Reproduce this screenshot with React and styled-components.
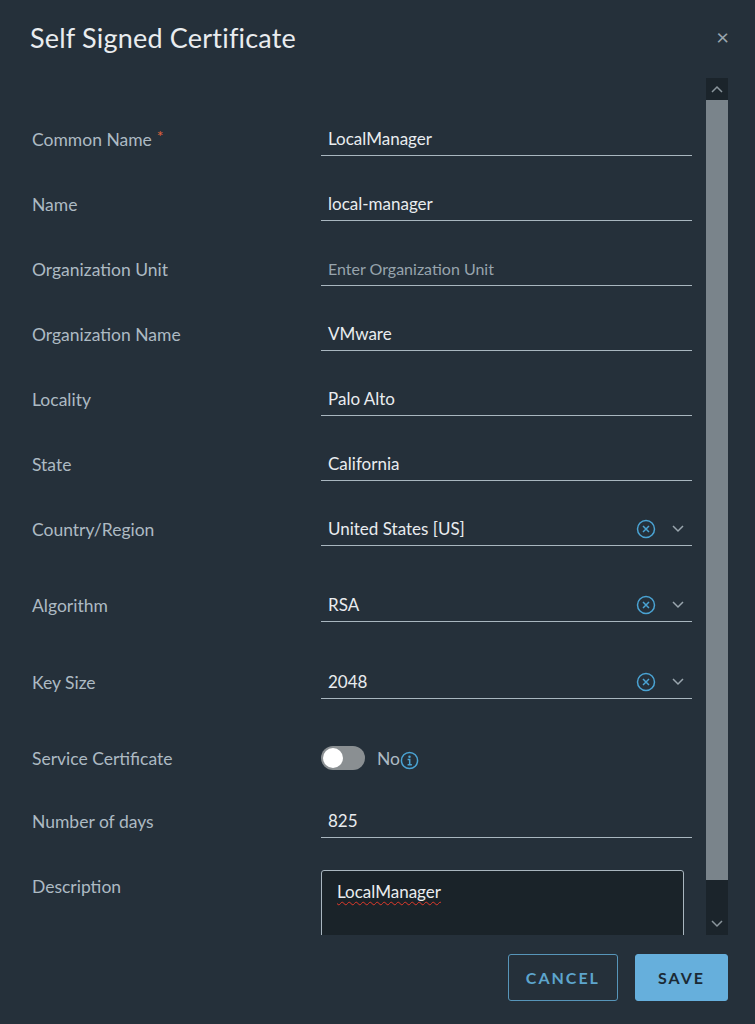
import React from "react";
import styled, { createGlobalStyle } from "styled-components";

const Global = createGlobalStyle`
  html, body { margin: 0; padding: 0; background: #25303a; }
  body { font-family: Lato, "Noto Sans", sans-serif; }
`;

const Modal = styled.div`
  width: 755px; height: 1024px; background: #25303a; display: flex; flex-direction: column;
  box-sizing: border-box;
`;
const Header = styled.div`
  height: 78px; display: flex; align-items: center; justify-content: space-between;
  padding: 0 30px 0 30px; box-sizing: border-box; padding-bottom: 4px;
`;
const Title = styled.h1`
  margin: 0; font-weight: 400; font-size: 27px; color: #e9ecef; letter-spacing: 0.2px;
`;
const Close = styled.div`
  color: #9aa6ae; font-size: 22px; line-height: 1; margin-right: -4px;
`;
const Body = styled.div`
  height: 857px; display: flex; overflow: hidden;
`;
const Form = styled.div`
  flex: 1; padding: 44px 14px 0 32px; display: flex; flex-direction: column;
`;
const Row = styled.div`
  height: ${p => p.$h}px; display: flex; align-items: flex-start; flex-shrink: 0;
`;
const Label = styled.div`
  width: 289px; height: 34px; display: flex; align-items: center;
  color: #adbac3; font-size: 17.5px;
`;
const Req = styled.span`
  color: #e0623c; margin-left: 5px; align-self: flex-start; margin-top: 4px; font-size: 16px;
`;
const Field = styled.div`
  width: 371px; height: 34px; box-sizing: border-box; border-bottom: 1.5px solid #a9b6bf;
  display: flex; align-items: center; padding: 0 8px 0 7px;
  color: ${p => (p.$placeholder ? "#97a4ad" : "#e9ecef")};
  font-size: ${p => (p.$placeholder ? "16px" : "17px")};
`;
const Value = styled.span` flex: 1; `;
const Toggle = styled.div`
  width: 44px; height: 24px; border-radius: 12px; background: #8a8f92; position: relative;
  &::after { content: ""; position: absolute; left: 2px; top: 2px; width: 20px; height: 20px;
    border-radius: 50%; background: #fff; }
`;
const ToggleWrap = styled.div`
  height: 34px; display: flex; align-items: center; gap: 12px; color: #adbac3; font-size: 17.5px;
`;
const TextArea = styled.div`
  width: 363px; height: 80px; box-sizing: border-box; border: 1.5px solid #a9b6bf; border-radius: 3px;
  background: #1a2329; padding: 10px 15px; color: #e9ecef; font-size: 17px;
`;
const Squiggle = styled.span`
  text-decoration: underline wavy #e03a2a; text-decoration-thickness: 1px; text-underline-offset: 3px;
`;
const Scroll = styled.div`
  width: 22px; margin-right: 27px; display: flex; flex-direction: column; background: #1b242b;
`;
const ScrollBtn = styled.div`
  height: 22px; display: flex; align-items: center; justify-content: center;
`;
const Thumb = styled.div` height: 780px; background: #7a848b; `;
const Track = styled.div` flex: 1; `;
const Footer = styled.div`
  flex: 1; display: flex; justify-content: flex-end; align-items: center; gap: 17px; padding: 0 27px 4px 0;
`;
const Button = styled.button`
  height: 47px; padding: 0 ${p => p.$px}px; border-radius: 3px; font-family: inherit; font-size: 16px;
  font-weight: 700; letter-spacing: 2px; cursor: pointer;
  background: ${p => (p.$primary ? "#66afdc" : "transparent")};
  color: ${p => (p.$primary ? "#1b2a35" : "#5da5cd")};
  border: 1.5px solid ${p => (p.$primary ? "#66afdc" : "#5795b9")};
`;

const ClearIcon = () => (
  <svg width="20" height="20" viewBox="0 0 20 20" style={{ marginRight: 16 }}>
    <circle cx="10" cy="10" r="8.5" fill="none" stroke="#4aa3d3" strokeWidth="1.5" />
    <path d="M7 7l6 6M13 7l-6 6" stroke="#4aa3d3" strokeWidth="1.5" />
  </svg>
);
const Chevron = ({ up, color = "#9aa6ae" }) => (
  <svg width="12" height="8" viewBox="0 0 12 8">
    <path d={up ? "M1 7l5-5 5 5" : "M1 1l5 5 5-5"} fill="none" stroke={color} strokeWidth="1.5" />
  </svg>
);
const Info = () => (
  <svg width="19" height="19" viewBox="0 0 20 20" style={{ marginLeft: -12, marginTop: 4 }}>
    <circle cx="10" cy="10" r="8.5" fill="none" stroke="#4aa3d3" strokeWidth="1.6" />
    <circle cx="10" cy="6" r="1.3" fill="#4aa3d3" />
    <path d="M8 9h2.2v5.5M8 14.5h4.5" fill="none" stroke="#4aa3d3" strokeWidth="1.6" />
  </svg>
);

const text = [
  ["Common Name", "LocalManager", true],
  ["Name", "local-manager"],
  ["Organization Unit", "Enter Organization Unit", false, true],
  ["Organization Name", "VMware"],
  ["Locality", "Palo Alto"],
  ["State", "California"],
];
const selects = [
  ["Country/Region", "United States [US]", 76],
  ["Algorithm", "RSA", 77],
  ["Key Size", "2048", 76],
];

export default function App() {
  return (
    <Modal>
      <Global />
      <Header>
        <Title>Self Signed Certificate</Title>
        <Close>×</Close>
      </Header>
      <Body>
        <Form>
          {text.map(([l, v, req, ph]) => (
            <Row $h={65} key={l}>
              <Label>{l}{req && <Req>*</Req>}</Label>
              <Field $placeholder={ph}><Value>{v}</Value></Field>
            </Row>
          ))}
          {selects.map(([l, v, h]) => (
            <Row $h={h} key={l}>
              <Label>{l}</Label>
              <Field><Value>{v}</Value><ClearIcon /><Chevron /></Field>
            </Row>
          ))}
          <Row $h={63}>
            <Label>Service Certificate</Label>
            <ToggleWrap><Toggle /><span>No</span><Info /></ToggleWrap>
          </Row>
          <Row $h={66}>
            <Label>Number of days</Label>
            <Field><Value>825</Value></Field>
          </Row>
          <Row $h={90}>
            <Label style={{ height: 34, marginTop: -1 }}>Description</Label>
            <TextArea><Squiggle>LocalManager</Squiggle></TextArea>
          </Row>
        </Form>
        <Scroll>
          <ScrollBtn><Chevron up color="#8a959c" /></ScrollBtn>
          <Thumb />
          <Track />
          <ScrollBtn><Chevron color="#8a959c" /></ScrollBtn>
        </Scroll>
      </Body>
      <Footer>
        <Button $px={17}>CANCEL</Button>
        <Button $primary $px={22}>SAVE</Button>
      </Footer>
    </Modal>
  );
}
